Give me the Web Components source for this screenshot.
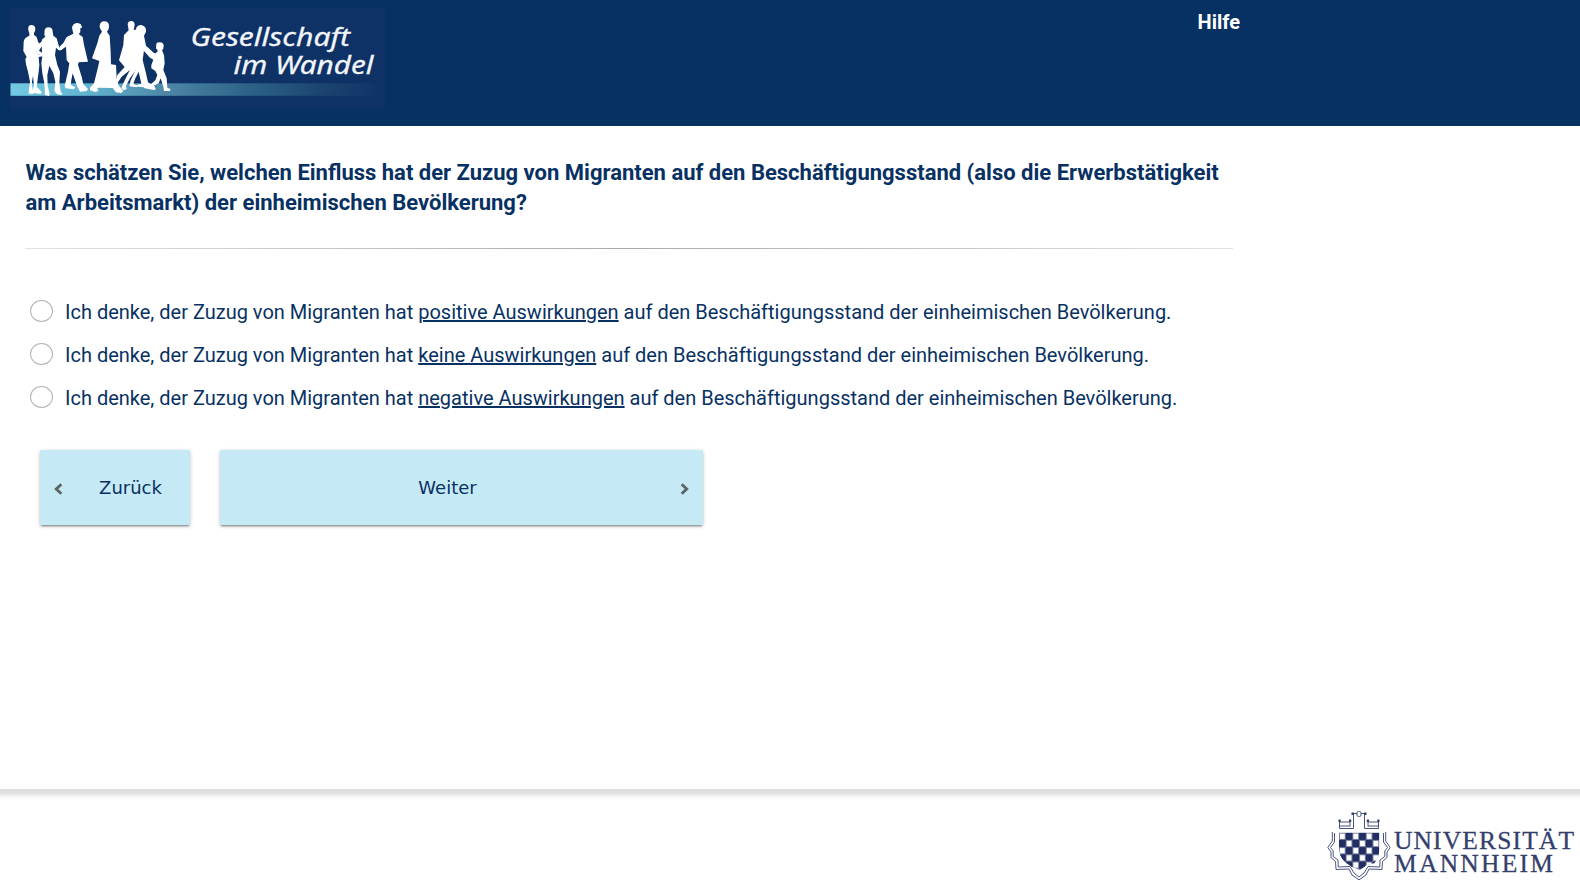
<!DOCTYPE html>
<html lang="de">
<head>
<meta charset="utf-8">
<title>Gesellschaft im Wandel</title>
<style>
html,body{margin:0;height:100%;background:#fff}
body{font-family:Roboto,"Liberation Sans",sans-serif;color:#083163;overflow:hidden}
</style>
</head>
<body>
<survey-page>
  <survey-header slot="header"></survey-header>
  <survey-question>Was schätzen Sie, welchen Einfluss hat der Zuzug von Migranten auf den Beschäftigungsstand (also die Erwerbstätigkeit<br>am Arbeitsmarkt) der einheimischen Bevölkerung?</survey-question>
  <survey-option>Ich denke, der Zuzug von Migranten hat <u>positive Auswirkungen</u> auf den Beschäftigungsstand der einheimischen Bevölkerung.</survey-option>
  <survey-option>Ich denke, der Zuzug von Migranten hat <u>keine Auswirkungen</u> auf den Beschäftigungsstand der einheimischen Bevölkerung.</survey-option>
  <survey-option>Ich denke, der Zuzug von Migranten hat <u>negative Auswirkungen</u> auf den Beschäftigungsstand der einheimischen Bevölkerung.</survey-option>
  <nav-button slot="nav" kind="back">Zurück</nav-button>
  <nav-button slot="nav" kind="next">Weiter</nav-button>
  <survey-footer slot="footer"></survey-footer>
</survey-page>
<script>
function define(name, html) {
  const t = document.createElement('template');
  t.innerHTML = html;
  customElements.define(name, class extends HTMLElement {
    constructor() {
      super();
      this.attachShadow({mode: 'open'}).appendChild(t.content.cloneNode(true));
    }
  });
}

define('survey-page', `
<style>
:host{display:flex;flex-direction:column;height:888px}
main{flex:1;padding:32px 0 0 25px}
nav{display:flex;gap:30px;padding:31px 0 0 15px}
</style>
<slot name="header"></slot>
<main><slot></slot><nav><slot name="nav"></slot></nav></main>
<slot name="footer"></slot>`);

define('survey-header', `
<style>
:host{display:flex;justify-content:space-between;height:126px;box-sizing:border-box;background:#083163;padding:8px 340px 0 10px}
b{font-size:20px;line-height:28px;color:#fff;white-space:nowrap}
</style>
<society-logo></society-logo><b>Hilfe</b>`);

define('society-logo', `
<style>:host{display:block;width:375px;height:101px}svg{display:block}</style>
<svg width="375" height="101" viewBox="10 8 375 101">
<defs><linearGradient id="g"><stop offset="0" stop-color="#72cbe2"/><stop offset=".2" stop-color="#62b5d1"/><stop offset=".42" stop-color="#4d86a6"/><stop offset=".62" stop-color="#2f6589"/><stop offset=".82" stop-color="#1c4671"/><stop offset="1" stop-color="#0f3166"/></linearGradient></defs>
<rect x="10" y="8" width="375" height="101" fill="#0e3166"/>
<rect x="10.500" y="83.300" width="374.500" height="12.500" fill="url(#g)"/>
<g fill="#fff" fill-rule="evenodd" transform="translate(10 15) scale(.33333)">
<path d="M55 36Q57 29 66 30Q76 32 76 42Q76 50 72 54L72 60L80 66L84 80L92 90L90 100L84 112L80 108L84 118L96 118L98 124L86 126L88 150L86 170L82 200L80 215L96 232L92 237L74 234L68 236L56 236L57 222L60 200L54 170L48 148L46 132L50 126L40 108L41 80Q42 68 58 62L58 54Q53 46 55 36ZM69 182L72 212L67 225L66 200Z"/>
<path d="M104 44Q108 36 117 37Q128 38 128 50L130 62L140 70L145 88L148 98L158 92L165 94L152 106L146 106L138 98L135 120L142 150L150 170L148 205L152 230L158 237L152 240L140 237L133 228L136 200L130 175L118 152L112 180L113 212L119 236L117 243L105 240L103 205L97 175L94 145L97 122L82 116L80 104L80 94L94 80Q96 70 106 65L103 60ZM95 94L87 107L96 113Z"/>
<path d="M186 38Q188 24 203 24Q214 26 214 32L217 37L211 40L211 52L206 57L218 66L222 90L234 140L206 142L204 150L215 185L220 208L234 222L230 228L210 230L202 215L188 175L184 195L182 210L196 217L192 223L166 220L164 212L174 170L178 145L170 136L168 95L158 102L152 106L148 96L160 84L170 66L190 56Z"/>
<path d="M270 40Q266 22 281 19Q298 19 297 34Q298 44 291 50L299 62L302 110L303 148L318 150L320 190L325 210L340 228L334 234L318 232L308 219L266 218L262 220L265 228L256 231L240 226L240 218L252 205L262 165L268 138L246 130L262 85L268 62L276 50Z"/>
<path d="M353 28Q354 17 366 18Q374 20 374 30L371 44L378 44Q378 30 394 30Q410 34 408 50L402 62L408 92L432 114L440 116L434 122L424 118L402 106L398 135L408 175L414 202L436 216L428 224L404 220L398 214L394 206L386 170L382 160L360 190L348 212L350 222L342 226L334 220L340 205L352 180L360 165L335 185L322 205L318 200L322 180L344 156L327 136L340 90L342 60L356 46Z"/>
<path d="M396 152L376 190L370 206L384 212L380 217L358 214L362 196L384 150ZM380 209L410 204L430 213L430 219L384 215Z" fill-rule="nonzero"/>
<path d="M439 86Q440 82 450 82Q462 83 461 94Q461 104 456 106L462 120L464 145L460 165L470 190L472 218L481 222L480 228L462 228L460 215L452 190L446 205L430 212L438 222L432 226L418 216L420 210L436 196L442 180L436 168L424 160L424 150L430 134L420 128L400 106L404 100L434 118L444 108L438 100Z"/>
</g>
<g fill="#f2f5fa" stroke="#f2f5fa" stroke-width=".3" font-family="'Noto Sans','Open Sans',sans-serif" font-style="italic" font-size="26">
<text x="190.500" y="45.800" textLength="159.500" lengthAdjust="spacingAndGlyphs">Gesellschaft</text>
<text x="233.500" y="74" textLength="140" lengthAdjust="spacingAndGlyphs">im Wandel</text>
</g>
</svg>`);

define('survey-question', `
<style>
:host{display:block;width:1208px;height:91px;margin-bottom:41px;font-size:22px;font-weight:700;line-height:30px;white-space:nowrap}
div{height:90px;text-indent:0;padding-left:.5px}
hr{margin:0;height:1px;border:0;background:linear-gradient(90deg,#e2e2e2,#aaa 50%,#e2e2e2)}
</style>
<div><slot></slot></div><hr>`);

define('survey-option', `
<style>
:host{display:flex;align-items:center;height:43px;font-size:20px;white-space:nowrap}
i{box-sizing:border-box;width:23px;height:22px;margin:-2px 12px 0 5px;border:1px solid #b3b3b3;border-radius:50%}
span{display:block}
</style>
<i></i><span><slot></slot></span>`);

define('nav-button', `
<style>
:host{display:flex;align-items:center;height:75px;box-sizing:border-box;background:#c5e9f5;box-shadow:0 2px 2px -1px rgba(0,0,0,.45),0 1px 4px rgba(0,0,0,.2);font:18px "DejaVu Sans",sans-serif;border-radius:1px}
:host([kind=back]){width:150px;padding-left:14px}
:host([kind=next]){width:483px;flex-direction:row-reverse;padding-right:14px}
svg{display:block;margin-top:2px}
:host([kind=next]) svg{transform:scaleX(-1)}
span{flex:1;text-align:center}
:host([kind=back]) span{margin-left:8px}
:host([kind=next]) span{margin-right:5px}
</style>
<svg width="9" height="12" viewBox="0 0 9 12"><path d="M7.300 1.300L2.300 6L7.300 10.700" fill="none" stroke="#5d6467" stroke-width="2.900"/></svg>
<span><slot></slot></span>`);

class UniversityLogo extends HTMLElement {
  constructor() {
    super();
    let cells = '';
    for (let r = 0; r < 5; r++) for (let c = 0; c < 6; c++) {
      const dark = (r + c) % 2 === 1, d = dark ? 0 : 1;
      cells += `<rect x="${1339 + c * 6.7 + d}" y="${832.7 + r * 7.2 + d}" width="${6.7 - 2 * d}" height="${7.2 - 2 * d}" fill="${dark ? '#222e62' : '#fff'}"/>`;
    }
    this.attachShadow({mode: 'open'}).innerHTML = `
<style>:host{display:block;width:253px;height:74px}svg{display:block}</style>
<svg width="253" height="74" viewBox="1325 808 253 74">
<defs><clipPath id="s"><path d="M1339 832.700H1379.200V850Q1379 858 1374.500 863L1366 865.500L1360 870L1352 867L1345 862Q1339 856 1339 848Z"/></clipPath></defs>
<g fill="none" stroke="#4a557d" stroke-width="1">
<path d="M1339.500 820.500V828.500H1353.500V814M1350 820.500V826.500M1339.500 822H1350M1339.500 826H1350M1378.500 820.500V828.500H1364.500V814M1368 820.500V826.500M1378.500 822H1368M1378.500 826H1368M1352 813.500H1366"/>
<rect x="1357" y="811.500" width="4" height="5" rx="1.500" fill="#fff"/>
<path d="M1332.300 832V841L1327.800 847.500L1331 852V857.500L1335.500 861.500L1336 869.500L1349 869L1352 875L1359 879.800L1366 875L1369 869L1382 869.500L1382.500 861.500L1387 857.500V852L1390.200 847.500L1385.700 841V832"/>
<path d="M1334.500 833V842L1330.500 847.500L1333.200 851V856.500L1338 860L1338.300 867L1350 866.500L1354 873L1359 877L1364 873L1368 866.500L1379.700 867L1380 860L1384.800 856.500V851L1387.500 847.500L1383.500 842V833"/>
</g>
<path fill="#343f6c" d="M1338.500 819.500h2.200v2.500h-2.200zM1349 819.500h2.200v2.500h-2.200zM1366.800 819.500h2.200v2.500h-2.200zM1377.300 819.500h2.200v2.500h-2.200zM1351.500 812.500h2.500v2.500h-2.500zM1364 812.500h2.500v2.500h-2.500z"/>
<g clip-path="url(#s)"><rect x="1338" y="832" width="42" height="40" fill="#7a83a2"/>${cells}</g>
<g fill="#343f6c" font-family="'Liberation Serif',serif" font-size="25.500" stroke="#343f6c" stroke-width=".3">
<text x="1394" y="849" textLength="180" lengthAdjust="spacing">UNIVERSITÄT</text>
<text x="1394" y="871.500" textLength="159" lengthAdjust="spacing">MANNHEIM</text>
</g>
</svg>`;
  }
}
customElements.define('university-logo', UniversityLogo);

define('survey-footer', `
<style>
:host{display:flex;justify-content:flex-end;align-items:flex-start;height:99px;box-sizing:border-box;padding:19px 2px 0 0;background:linear-gradient(#e0e0e0 0 4px,#ededed 6px,#f8f8f8 8px,#fff 11px)}
</style>
<university-logo></university-logo>`);
</script>
</body>
</html>
